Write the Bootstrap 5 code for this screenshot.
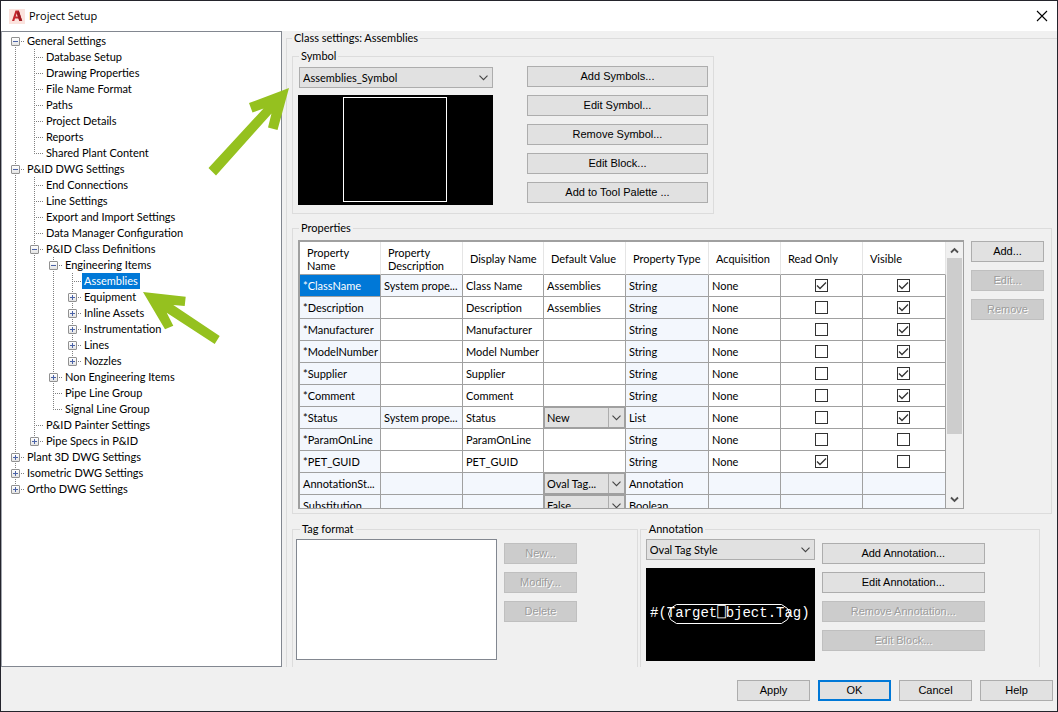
<!DOCTYPE html>
<html lang="en">
<head>
<meta charset="utf-8">
<meta name="viewport" content="width=device-width, initial-scale=1">
<title>Project Setup</title>
<link href="https://cdn.jsdelivr.net/npm/bootstrap@5.3.0/dist/css/bootstrap.min.css" rel="stylesheet">
<style>
  :root { --face: #f0f0f0; --line: #dcdcdc; --grid: #a0a0a0; --tint: #f3f7fd; --accent: #0078d7; }
  body { font-family: Lato, "Liberation Sans", Arial, sans-serif; font-size: 11px; line-height: 14px; color: #000; background: var(--face); }
  .dialog { border: 1px solid #24242c; background: var(--face); }
  .titlebar { height: 30px; background: #fff; font-family: "Open Sans", sans-serif; font-size: 11px; }
  .close-btn { width: 13px; height: 13px; }

  /* tree */
  .tree-pane { flex: 0 0 281px; background: #fff; border: 1px solid #828790; border-left-color: #a0a4ac; padding: 1px 0 0 9px; }
  .tree ul, .tree { list-style: none; margin: 0; padding: 0; }
  .tree ul { padding-left: 19px; }
  .tree li {
    background:
      repeating-linear-gradient(#808080 0 1px, transparent 1px 2px) 4px 0 / 1px 100% no-repeat,
      repeating-linear-gradient(90deg, #808080 0 1px, transparent 1px 2px) 4px 8px / 9px 1px no-repeat;
  }
  .tree li:last-child { background-size: 1px 8px, 9px 1px; }
  .tree > li:first-child { background-position: 4px 8px, 4px 8px; }
  .node { display: flex; align-items: center; height: 16px; }
  .node a { color: #000; text-decoration: none; line-height: 16px; padding: 0 2px; white-space: nowrap; }
  .node a:first-child { margin-left: 14px; }
  .node a.active { background: var(--accent); color: #fff; }
  .twist { width: 9px; height: 9px; margin-right: 5px; padding: 0; border: 1px solid #919191; border-radius: 1px;
    background: linear-gradient(#4b63a7, #4b63a7) center / 5px 1px no-repeat, linear-gradient(#fff, #e4e4e4); }
  .twist.shut { background: linear-gradient(#4b63a7, #4b63a7) center / 5px 1px no-repeat, linear-gradient(#4b63a7, #4b63a7) center / 1px 5px no-repeat, linear-gradient(#fff, #e4e4e4); }
  .pointer { position: absolute; z-index: 5; fill: #95c11f; pointer-events: none; }
  .pointer-a { left: 206px; top: 56px; }
  .pointer-b { left: 141px; top: 260px; }

  /* group boxes */
  fieldset { border: 1px solid var(--line); padding: 3px 5px; min-width: 0; }
  legend { float: none; width: auto; margin: 0; padding: 0 2px; font-size: 11px; line-height: 14px; }
  .indent > legend { margin-left: 1px; }
  .open-end { border-bottom: 0; padding-bottom: 0; }
  .class-group { padding: 4px 1px 0 5px; }
  .symbol-group { width: 422px; padding-bottom: 8px; }
  .symbol-pick { padding: 1px 0 7px 1px; }
  .prop-group { margin-top: 7px; padding: 5px 7px 4px 5px; }
  .lower-groups { gap: 2px; }
  .tag-group { flex: 346 1 0; padding-left: 3px; }
  .note-group { flex: 400 1 0; }
  .side { gap: 7px; }

  .push { height: 21px; width: 73px; padding: 0; font-family: "Liberation Sans", Arial, sans-serif; font-size: 11px; line-height: 17px; border: 1px solid #adadad; border-radius: 0; background: #e1e1e1; color: #000; white-space: nowrap; }
  .push:disabled { background: #ccc; border-color: #bfbfbf; color: #9c9c9c; opacity: 1; text-shadow: 1px 1px 0 #fff; }
  .push.default { border: 2px solid var(--accent); line-height: 15px; }
  .stack { display: flex; flex-direction: column; gap: 8px; }
  .prop-group .stack { padding-top: 1px; }
  .w-sym { width: 181px; } .w-note { width: 163px; }

  .combo { height: 21px; padding: 0 18px 0 3px; font-size: 11px; line-height: 18px; color: #000; border: 1px solid #adadad; border-radius: 0;
    background: #e1e1e1 url("data:image/svg+xml,%3Csvg xmlns='http://www.w3.org/2000/svg' width='9' height='6'%3E%3Cpath d='M.5.7l4 4 4-4' fill='none' stroke='%23444' stroke-width='1.1'/%3E%3C/svg%3E") right 4px center / 9px 6px no-repeat; }
  .cell-combo { padding: 0 17px 0 2px; border-color: #a0a0a0;
    background-image: url("data:image/svg+xml,%3Csvg xmlns='http://www.w3.org/2000/svg' width='9' height='6'%3E%3Cpath d='M.5.7l4 4 4-4' fill='none' stroke='%23444' stroke-width='1.1'/%3E%3C/svg%3E"), linear-gradient(#adadad, #adadad);
    background-size: 9px 6px, 1px 100%; background-position: right 3px center, right 15px top; }
  .preview { display: block; background: #000; }

  /* property grid */
  .grid-frame { height: 269px; border: 1px solid #a0a0a0; border-width: 2px 1px 1px 2px; background: var(--face); overflow: hidden; }
  .prop-table { table-layout: fixed; width: 100%; border-collapse: separate; border-spacing: 0; background: #fff; }
  .prop-table th { height: 33px; padding: 1px 2px 0 7px; font-weight: 400; line-height: 13px; vertical-align: middle; border-right: 1px solid #e5e5e5; border-bottom: 1px solid var(--grid); }
  .prop-table td { height: 22px; padding: 0 1px 0 3px; line-height: 21px; white-space: nowrap; border-right: 1px solid var(--grid); border-bottom: 1px solid var(--grid); }
  .prop-table td.tint, .prop-table tr.tint td { background: var(--tint); }
  .prop-table td.picked { background: var(--accent); color: #fff; }
  .prop-table td.pick { padding: 0; }
  .prop-table td.tick { padding: 0; }
  .tick input { appearance: none; display: block; width: 13px; height: 13px; margin: 0 auto; border: 1px solid #333; background: #fff; }
  .tick input:checked { background: #fff url("data:image/svg+xml,%3Csvg xmlns='http://www.w3.org/2000/svg' width='11' height='11'%3E%3Cpath d='M1 5.5l3 3L10 2.5' fill='none' stroke='%23333' stroke-width='1.3'/%3E%3C/svg%3E"); }
  .scroller { flex: 0 0 17px; padding: 0 1px; }
  .scroller svg { display: block; }
  .thumb { height: 176px; background: #cdcdcd; }

  .tag-list { width: 201px; height: 121px; border: 1px solid #828790; background-color: #fff; border-radius: 0; padding: 0; background-image: none; }
  .footer-bar { height: 44px; gap: 8px; padding: 13px 4px 0 0; }
</style>
</head>
<body>
<div class="dialog d-flex flex-column min-vh-100">
  <header class="titlebar d-flex align-items-center justify-content-between ps-2 pe-2">
    <div class="d-flex align-items-center gap-1">
      <svg width="16" height="15" viewBox="0 0 16 15" aria-hidden="true"><rect width="16" height="15" fill="#fbe3de"/><path d="M3 12 6.500 1.400h3.300L13.200 12h-2.900l-.8-2.400H6L5.300 12zM6.700 7.600h2.200L7.800 4.200z" fill="#c4262e"/><path d="M9.800 1.400 13.200 12h-2.900L7.800 4.200z" fill="#9c1c22"/></svg>
      <span>Project Setup</span>
    </div>
    <button type="button" class="close-btn btn p-0 border-0 d-flex" aria-label="Close"><svg width="12" height="12" viewBox="0 0 12 12"><path d="M1 1l10 10M11 1 1 11" stroke="#000" stroke-width="1.1"/></svg></button>
  </header>

  <div class="d-flex flex-grow-1">
    <nav class="tree-pane position-relative" aria-label="Settings">
      <ul class="tree">
        <li><div class="node"><button class="twist" aria-label="Collapse"></button><a href="#">General Settings</a></div>
          <ul>
            <li><div class="node"><a href="#">Database Setup</a></div></li>
            <li><div class="node"><a href="#">Drawing Properties</a></div></li>
            <li><div class="node"><a href="#">File Name Format</a></div></li>
            <li><div class="node"><a href="#">Paths</a></div></li>
            <li><div class="node"><a href="#">Project Details</a></div></li>
            <li><div class="node"><a href="#">Reports</a></div></li>
            <li><div class="node"><a href="#">Shared Plant Content</a></div></li>
          </ul></li>
        <li><div class="node"><button class="twist" aria-label="Collapse"></button><a href="#">P&amp;ID DWG Settings</a></div>
          <ul>
            <li><div class="node"><a href="#">End Connections</a></div></li>
            <li><div class="node"><a href="#">Line Settings</a></div></li>
            <li><div class="node"><a href="#">Export and Import Settings</a></div></li>
            <li><div class="node"><a href="#">Data Manager Configuration</a></div></li>
            <li><div class="node"><button class="twist" aria-label="Collapse"></button><a href="#">P&amp;ID Class Definitions</a></div>
              <ul>
                <li><div class="node"><button class="twist" aria-label="Collapse"></button><a href="#">Engineering Items</a></div>
                  <ul>
                    <li><div class="node"><a href="#" class="active">Assemblies</a></div></li>
                    <li><div class="node"><button class="twist shut" aria-label="Expand"></button><a href="#">Equipment</a></div></li>
                    <li><div class="node"><button class="twist shut" aria-label="Expand"></button><a href="#">Inline Assets</a></div></li>
                    <li><div class="node"><button class="twist shut" aria-label="Expand"></button><a href="#">Instrumentation</a></div></li>
                    <li><div class="node"><button class="twist shut" aria-label="Expand"></button><a href="#">Lines</a></div></li>
                    <li><div class="node"><button class="twist shut" aria-label="Expand"></button><a href="#">Nozzles</a></div></li>
                  </ul></li>
                <li><div class="node"><button class="twist shut" aria-label="Expand"></button><a href="#">Non Engineering Items</a></div></li>
                <li><div class="node"><a href="#">Pipe Line Group</a></div></li>
                <li><div class="node"><a href="#">Signal Line Group</a></div></li>
              </ul></li>
            <li><div class="node"><a href="#">P&amp;ID Painter Settings</a></div></li>
            <li><div class="node"><button class="twist shut" aria-label="Expand"></button><a href="#">Pipe Specs in P&amp;ID</a></div></li>
          </ul></li>
        <li><div class="node"><button class="twist shut" aria-label="Expand"></button><a href="#">Plant 3D DWG Settings</a></div></li>
        <li><div class="node"><button class="twist shut" aria-label="Expand"></button><a href="#">Isometric DWG Settings</a></div></li>
        <li><div class="node"><button class="twist shut" aria-label="Expand"></button><a href="#">Ortho DWG Settings</a></div></li>
      </ul>
      <svg class="pointer pointer-a" width="82" height="88" viewBox="0 0 82 88" aria-hidden="true"><path d="M81 0 41 15 44.500 24.500 55.500 20.500 0.500 80 8 87.500 63.500 25.500 60 39.500 69.500 42z"/></svg>
      <svg class="pointer pointer-b" width="78" height="54" viewBox="0 0 78 54" aria-hidden="true"><path d="M0 0 42.700 4.700 41.700 14 30.300 13 76.700 44 71.700 52 23.700 20.700 30.300 33.700 22 37.300z"/></svg>
    </nav>

    <main class="d-flex flex-grow-1 ps-1">
      <fieldset class="class-group open-end flex-grow-1 d-flex flex-column border-end-0">
        <legend>Class settings: Assemblies</legend>
        <fieldset class="symbol-group indent">
          <legend>Symbol</legend>
          <div class="d-flex justify-content-between">
            <div>
              <div class="symbol-pick"><select class="combo form-select" aria-label="Symbol"><option>Assemblies_Symbol</option></select></div>
              <svg class="preview" width="195" height="110" viewBox="0 0 195 110" aria-hidden="true"><rect x="45.500" y="2.500" width="103" height="104" fill="none" stroke="#fff"/></svg>
            </div>
            <div class="stack">
              <button class="push btn w-sym">Add Symbols...</button>
              <button class="push btn w-sym">Edit Symbol...</button>
              <button class="push btn w-sym">Remove Symbol...</button>
              <button class="push btn w-sym">Edit Block...</button>
              <button class="push btn w-sym">Add to Tool Palette ...</button>
            </div>
          </div>
        </fieldset>

        <fieldset class="prop-group indent me-1">
          <legend>Properties</legend>
          <div class="side d-flex">
            <div class="grid-frame d-flex flex-grow-1">
              <div class="flex-grow-1 overflow-hidden">
                <table class="prop-table">
                  <colgroup><col style="width:12.54%"><col style="width:12.69%"><col style="width:12.54%"><col style="width:12.69%"><col style="width:12.85%"><col style="width:11.15%"><col style="width:12.69%"><col style="width:12.85%"></colgroup>
                  <thead><tr><th>Property Name</th><th>Property Description</th><th>Display Name</th><th>Default Value</th><th>Property Type</th><th>Acquisition</th><th>Read Only</th><th>Visible</th></tr></thead>
                  <tbody>
                    <tr><td class="picked">*ClassName</td><td class="tint">System prope...</td><td>Class Name</td><td>Assemblies</td><td class="tint">String</td><td>None</td><td class="tick"><input type="checkbox" aria-label="Read only" checked></td><td class="tick"><input type="checkbox" aria-label="Visible" checked></td></tr>
                    <tr><td class="tint">*Description</td><td></td><td>Description</td><td>Assemblies</td><td class="tint">String</td><td>None</td><td class="tick"><input type="checkbox" aria-label="Read only"></td><td class="tick"><input type="checkbox" aria-label="Visible" checked></td></tr>
                    <tr><td class="tint">*Manufacturer</td><td></td><td>Manufacturer</td><td></td><td class="tint">String</td><td>None</td><td class="tick"><input type="checkbox" aria-label="Read only"></td><td class="tick"><input type="checkbox" aria-label="Visible" checked></td></tr>
                    <tr><td class="tint">*ModelNumber</td><td></td><td>Model Number</td><td></td><td class="tint">String</td><td>None</td><td class="tick"><input type="checkbox" aria-label="Read only"></td><td class="tick"><input type="checkbox" aria-label="Visible" checked></td></tr>
                    <tr><td class="tint">*Supplier</td><td></td><td>Supplier</td><td></td><td class="tint">String</td><td>None</td><td class="tick"><input type="checkbox" aria-label="Read only"></td><td class="tick"><input type="checkbox" aria-label="Visible" checked></td></tr>
                    <tr><td class="tint">*Comment</td><td></td><td>Comment</td><td></td><td class="tint">String</td><td>None</td><td class="tick"><input type="checkbox" aria-label="Read only"></td><td class="tick"><input type="checkbox" aria-label="Visible" checked></td></tr>
                    <tr><td class="tint">*Status</td><td class="tint">System prope...</td><td>Status</td><td class="pick"><select class="combo cell-combo form-select" aria-label="Status"><option>New</option></select></td><td class="tint">List</td><td>None</td><td class="tick"><input type="checkbox" aria-label="Read only"></td><td class="tick"><input type="checkbox" aria-label="Visible" checked></td></tr>
                    <tr><td class="tint">*ParamOnLine</td><td></td><td>ParamOnLine</td><td></td><td class="tint">String</td><td>None</td><td class="tick"><input type="checkbox" aria-label="Read only"></td><td class="tick"><input type="checkbox" aria-label="Visible"></td></tr>
                    <tr><td class="tint">*PET_GUID</td><td></td><td>PET_GUID</td><td></td><td class="tint">String</td><td>None</td><td class="tick"><input type="checkbox" aria-label="Read only" checked></td><td class="tick"><input type="checkbox" aria-label="Visible"></td></tr>
                    <tr class="tint"><td>AnnotationSt...</td><td></td><td></td><td class="pick"><select class="combo cell-combo form-select" aria-label="Annotation style"><option>Oval Tag...</option></select></td><td>Annotation</td><td></td><td></td><td></td></tr>
                    <tr class="tint"><td>Substitution</td><td></td><td></td><td class="pick"><select class="combo cell-combo form-select" aria-label="Substitution"><option>False</option></select></td><td>Boolean</td><td></td><td></td><td></td></tr>
                  </tbody>
                </table>
              </div>
              <div class="scroller d-flex flex-column" aria-hidden="true">
                <svg width="15" height="16" viewBox="0 0 15 16"><path d="M4 10.500 7.500 7 11 10.500" fill="none" stroke="#505050" stroke-width="1.8"/></svg>
                <div class="thumb"></div>
                <svg class="mt-auto" width="15" height="16" viewBox="0 0 15 16"><path d="M4 5.500 7.500 9 11 5.500" fill="none" stroke="#505050" stroke-width="1.8"/></svg>
              </div>
            </div>
            <div class="stack">
              <button class="push btn">Add...</button>
              <button class="push btn" disabled>Edit...</button>
              <button class="push btn" disabled>Remove</button>
            </div>
          </div>
        </fieldset>

        <div class="lower-groups d-flex flex-grow-1 mt-2 me-3">
          <fieldset class="tag-group indent open-end">
            <legend class="ms-1">Tag format</legend>
            <div class="side d-flex">
              <select class="tag-list form-select" size="6" aria-label="Tag format"></select>
              <div class="stack pt-1">
                <button class="push btn" disabled>New...</button>
                <button class="push btn" disabled>Modify...</button>
                <button class="push btn" disabled>Delete</button>
              </div>
            </div>
          </fieldset>
          <fieldset class="note-group indent open-end">
            <legend>Annotation</legend>
            <div class="side d-flex">
              <div>
                <select class="combo form-select mb-2" aria-label="Annotation"><option>Oval Tag Style</option></select>
                <svg class="preview" width="169" height="93" viewBox="0 0 169 93"><text x="4" y="49" fill="#fff" font-family="'Liberation Mono','DejaVu Sans Mono',monospace" font-size="14">#(Target<tspan font-family="'DejaVu Sans Mono'">⎕</tspan>bject.Tag)</text><path d="M30.500 36.500H135.500L141.500 40.500 143.500 46 141.500 51.500 135.500 55.500H30.500L24.500 51.500 22.500 46 24.500 40.500z" fill="none" stroke="#fff"/></svg>
              </div>
              <div class="stack pt-1">
                <button class="push btn w-note">Add Annotation...</button>
                <button class="push btn w-note">Edit Annotation...</button>
                <button class="push btn w-note" disabled>Remove Annotation...</button>
                <button class="push btn w-note" disabled>Edit Block...</button>
              </div>
            </div>
          </fieldset>
        </div>
      </fieldset>
    </main>
  </div>

  <footer class="footer-bar d-flex justify-content-end">
    <button class="push btn">Apply</button>
    <button class="push btn default">OK</button>
    <button class="push btn">Cancel</button>
    <button class="push btn">Help</button>
  </footer>
</div>
<script src="https://cdn.jsdelivr.net/npm/bootstrap@5.3.0/dist/js/bootstrap.bundle.min.js"></script>
</body>
</html>
